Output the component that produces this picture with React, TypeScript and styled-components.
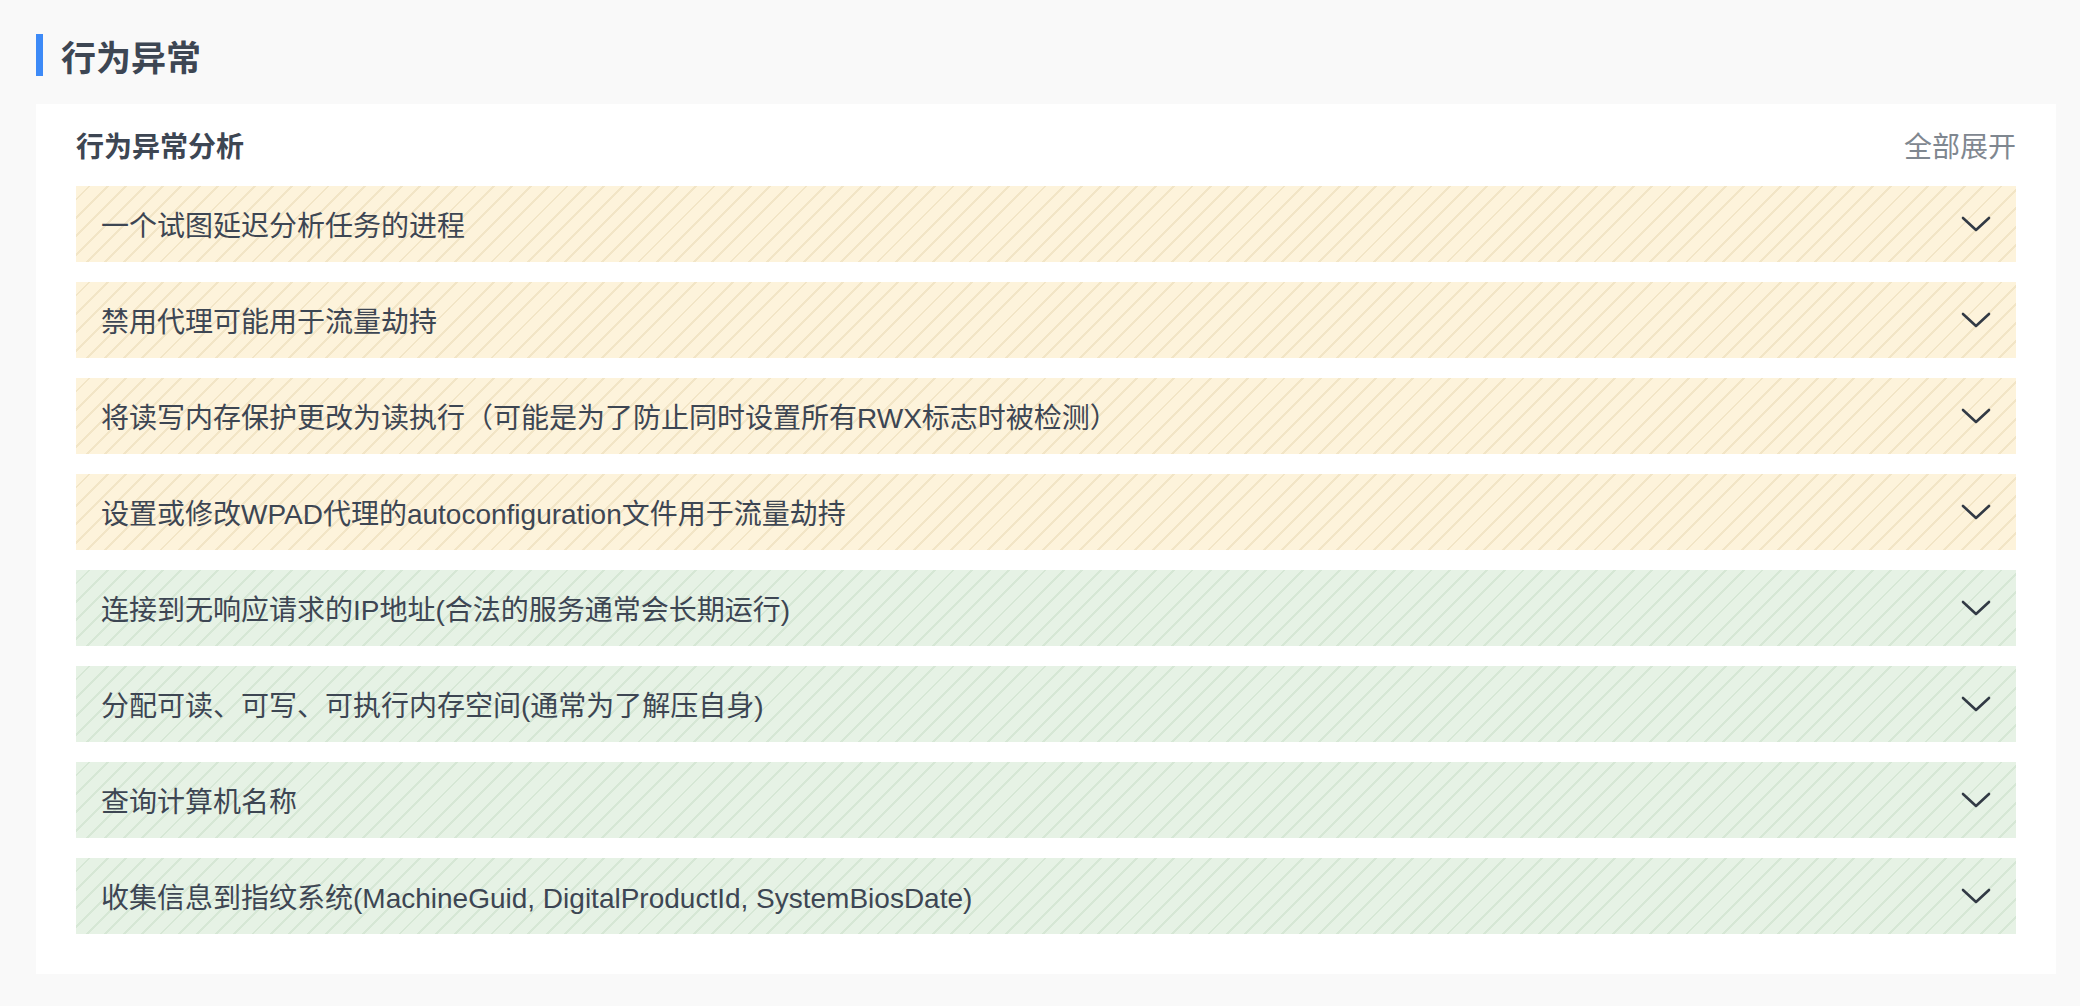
import React from 'react'
import styled, { createGlobalStyle } from 'styled-components'

const GlobalStyle = createGlobalStyle`
  html, body {
    margin: 0;
    background: #f9f9f9;
    font-family: "Liberation Sans", "Noto Sans CJK SC", sans-serif;
    color: #3d4653;
  }
`

const Page = styled.div`
  padding: 34px 24px 33px 36px;
`

const Heading = styled.h1`
  margin: 0;
  height: 42px;
  display: flex;
  align-items: center;
  border-left: 7px solid #3d8af7;
  padding-left: 18px;
  font-size: 35px;
  font-weight: 700;
  color: #3d4653;
`

const Card = styled.section`
  margin-top: 28px;
  background: #fff;
  padding: 0 40px 40px 40px;
`

const CardHeader = styled.div`
  height: 82px;
  display: flex;
  align-items: center;
  justify-content: space-between;
`

const CardTitle = styled.h2`
  margin: 0;
  font-size: 28px;
  font-weight: 700;
  color: #3d4653;
`

const ExpandAll = styled.span`
  font-size: 28px;
  color: #7f8790;
  cursor: pointer;
`

const List = styled.div`
  display: flex;
  flex-direction: column;
  gap: 20px;
`

const palette = {
  warn: { bg: '#fdf3db', line: '#f2e5c6' },
  info: { bg: '#e6f2e5', line: '#d6e7d5' },
}

const Row = styled.div<{ $level: 'warn' | 'info' }>`
  height: 76px;
  display: flex;
  align-items: center;
  justify-content: space-between;
  padding: 0 24px 0 25px;
  background-color: ${p => palette[p.$level].bg};
  background-image: repeating-linear-gradient(
    -45deg,
    ${p => palette[p.$level].bg} 0 11px,
    ${p => palette[p.$level].line} 11px 13px
  );
  font-size: 28px;
  color: #3d4653;
  cursor: pointer;
`

const Chevron = () => (
  <svg width="32" height="18" viewBox="0 0 32 18" fill="none">
    <path d="M3 3l13 12L29 3" stroke="#323a45" strokeWidth="2.6" strokeLinecap="round" strokeLinejoin="round" />
  </svg>
)

const items: { text: string; level: 'warn' | 'info' }[] = [
  { text: '一个试图延迟分析任务的进程', level: 'warn' },
  { text: '禁用代理可能用于流量劫持', level: 'warn' },
  { text: '将读写内存保护更改为读执行（可能是为了防止同时设置所有RWX标志时被检测）', level: 'warn' },
  { text: '设置或修改WPAD代理的autoconfiguration文件用于流量劫持', level: 'warn' },
  { text: '连接到无响应请求的IP地址(合法的服务通常会长期运行)', level: 'info' },
  { text: '分配可读、可写、可执行内存空间(通常为了解压自身)', level: 'info' },
  { text: '查询计算机名称', level: 'info' },
  { text: '收集信息到指纹系统(MachineGuid, DigitalProductId, SystemBiosDate)', level: 'info' },
]

export default function App() {
  return (
    <>
      <GlobalStyle />
      <Page>
        <Heading>行为异常</Heading>
        <Card>
          <CardHeader>
            <CardTitle>行为异常分析</CardTitle>
            <ExpandAll>全部展开</ExpandAll>
          </CardHeader>
          <List>
            {items.map(item => (
              <Row key={item.text} $level={item.level}>
                <span>{item.text}</span>
                <Chevron />
              </Row>
            ))}
          </List>
        </Card>
      </Page>
    </>
  )
}
